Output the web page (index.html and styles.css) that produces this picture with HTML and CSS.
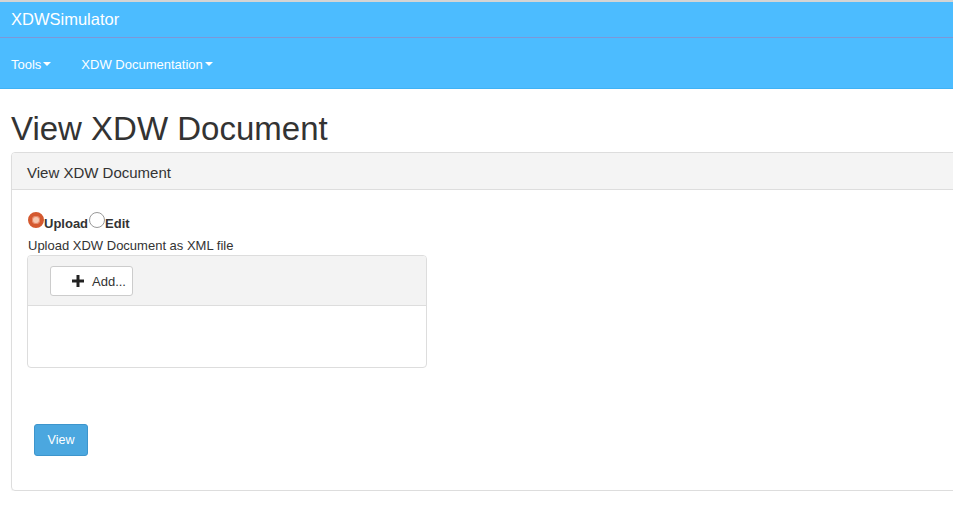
FILE: index.html
```html
<!DOCTYPE html>
<html>
<head>
<meta charset="utf-8">
<title>XDWSimulator</title>
<link rel="stylesheet" href="styles.css">
</head>
<body>
<header class="navbar">
  <div class="brand-bar"><span class="brand">XDWSimulator</span></div>
  <nav class="menu-bar">
    <span class="menu-item">Tools<span class="caret"></span></span>
    <span class="menu-item">XDW Documentation<span class="caret"></span></span>
  </nav>
</header>
<main class="page">
  <h1 class="title">View XDW Document</h1>
  <section class="panel">
    <div class="panel-heading">View XDW Document</div>
    <div class="panel-body">
      <div class="radios">
        <label class="radio"><span class="radio-dot checked"></span>Upload</label>
        <label class="radio"><span class="radio-dot"></span>Edit</label>
      </div>
      <div class="hint">Upload XDW Document as XML file</div>
      <div class="upload">
        <div class="upload-bar">
          <button class="add-btn"><svg class="plus" viewBox="0 0 12 12" width="12" height="12"><path d="M4.5 0h3v4.5H12v3H7.5V12h-3V7.5H0v-3h4.5z" fill="#222"/></svg>Add...</button>
        </div>
        <div class="upload-content"></div>
      </div>
      <button class="view-btn">View</button>
    </div>
  </section>
</main>
</body>
</html>
```
FILE: styles.css
```css
html, body {
  margin: 0;
  padding: 0;
  overflow: hidden;
  background: #fff;
  font-family: "Liberation Sans", Arial, sans-serif;
  color: #333;
}
.navbar {
  border-top: 2px solid #d4d4d4;
  background: #4cbcff;
}
.brand-bar {
  height: 35px;
  display: flex;
  align-items: center;
  padding-left: 11px;
  border-bottom: 1px solid #7d97d8;
}
.brand {
  color: #fff;
  font-size: 16.5px;
  margin-top: -1px;
}
.menu-bar {
  height: 50px;
  display: flex;
  align-items: center;
  padding-left: 11px;
  gap: 30px;
  border-bottom: 1px solid #3fb2f5;
}
.menu-item {
  color: #fff;
  font-size: 13px;
  display: inline-flex;
  align-items: center;
  margin-top: 2px;
}
.caret {
  display: inline-block;
  width: 0;
  height: 0;
  margin-left: 2px;
  border-top: 4px solid #fff;
  border-left: 4px solid transparent;
  border-right: 4px solid transparent;
}
.page {
  padding-left: 11px;
}
.title {
  margin: 0;
  padding-top: 20px;
  height: 43px;
  font-size: 33px;
  font-weight: 400;
  line-height: 40px;
  color: #333;
}
.panel {
  width: 980px;
  border: 1px solid #ddd;
  border-radius: 4px;
  box-shadow: 0 1px 1px rgba(0,0,0,0.05);
}
.panel-heading {
  height: 37px;
  box-sizing: border-box;
  padding: 11px 15px 0 15px;
  background: #f4f4f4;
  border-bottom: 1px solid #ddd;
  border-radius: 3px 3px 0 0;
  font-size: 15px;
}
.panel-body {
  padding: 22px 15px 34px 15px;
}
.radios {
  display: flex;
  align-items: baseline;
}
.radio {
  display: inline-flex;
  align-items: baseline;
  font-size: 13px;
  line-height: 16px;
  font-weight: 700;
  color: #333;
}
.radio-dot {
  width: 16px;
  height: 16px;
  box-sizing: border-box;
  border-radius: 50%;
  border: 1px solid #999;
  background: #fff;
  margin-left: 1px;
  margin-bottom: -1px;
}
.radio-dot.checked {
  border: 4px solid #d4592f;
  background: #f6c8b0;
  box-shadow: inset 0 0 0 1px #e9896a;
}
.hint {
  font-size: 13px;
  line-height: 16px;
  height: 16px;
  margin-top: 6px;
  margin-left: 1px;
}
.upload {
  width: 398px;
  margin-top: 1px;
  border: 1px solid #ddd;
  border-radius: 4px;
}
.upload-bar {
  height: 50px;
  box-sizing: border-box;
  background: #f3f3f3;
  border-bottom: 1px solid #ddd;
  border-radius: 3px 3px 0 0;
  padding: 10px 0 0 22px;
}
.add-btn {
  width: 83px;
  height: 30px;
  box-sizing: border-box;
  background: #fff;
  border: 1px solid #ccc;
  border-radius: 3px;
  font-family: "Liberation Sans", Arial, sans-serif;
  font-size: 13px;
  color: #333;
  display: flex;
  align-items: center;
  padding: 0 0 0 21px;
}
.plus {
  margin-right: 8px;
}
.upload-content {
  height: 61px;
}
.view-btn {
  display: block;
  margin: 56px 0 0 7px;
  width: 54px;
  height: 32px;
  background: #4ba7df;
  border: 1px solid #3d95cc;
  border-radius: 3px;
  color: #fff;
  font-family: "Liberation Sans", Arial, sans-serif;
  font-size: 12.5px;
}
```
